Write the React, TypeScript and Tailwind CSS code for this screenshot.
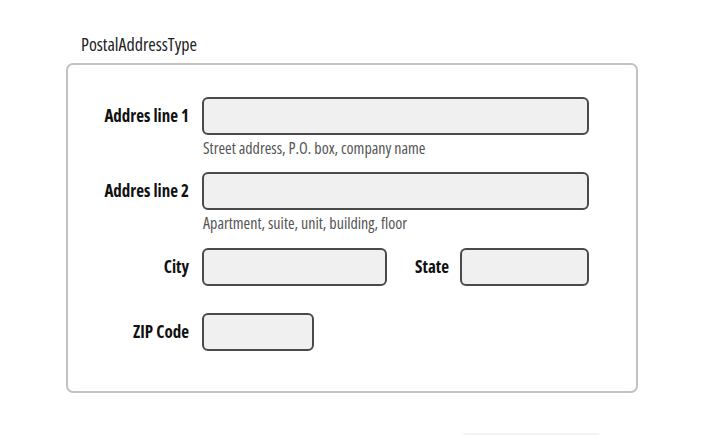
import React from 'react';

const font = { fontFamily: '"Open Sans", "Noto Sans", sans-serif' };

const Field: React.FC<{ w: string }> = ({ w }) => (
  <div className={`h-[38px] ${w} rounded-[6px] border-2 border-[#4a4a4a] bg-[#f0f0f0]`}></div>
);

const Label: React.FC<{ children: React.ReactNode }> = ({ children }) => (
  <div className="w-[121px] text-right text-[17px] leading-[20px] font-bold">{children}</div>
);

export default function App() {
  return (
    <div className="min-h-screen bg-white text-[#111] font-stretch-condensed" style={font}>
      <div className="pl-[81px] pt-[33px] text-[18px] leading-[22px] text-[#222]">PostalAddressType</div>

      <div className="ml-[66px] mt-[8px] w-[572px] rounded-[7px] border-2 border-[#c2c2c2] pt-[32px] pb-[40px]">
        {/* line 1 */}
        <div className="flex items-center">
          <Label>Addres line 1</Label>
          <div className="ml-[13px]"><Field w="w-[387px]" /></div>
        </div>
        <div className="ml-[135px] mt-[5px] text-[16px] leading-[17px] text-[#555]">Street address, P.O. box, company name</div>

        {/* line 2 */}
        <div className="mt-[15px] flex items-center">
          <Label>Addres line 2</Label>
          <div className="ml-[13px]"><Field w="w-[387px]" /></div>
        </div>
        <div className="ml-[135px] mt-[5px] text-[16px] leading-[17px] text-[#555]">Apartment, suite, unit, building, floor</div>

        {/* city / state */}
        <div className="mt-[16px] flex items-center">
          <Label>City</Label>
          <div className="ml-[13px] flex w-[387px] items-center">
            <Field w="w-[185px]" />
            <div className="ml-auto flex items-center gap-[11px]">
              <span className="text-[17px] leading-[20px] font-bold">State</span>
              <Field w="w-[129px]" />
            </div>
          </div>
        </div>

        {/* zip */}
        <div className="mt-[27px] flex items-center">
          <Label>ZIP Code</Label>
          <div className="ml-[13px]"><Field w="w-[112px]" /></div>
        </div>
      </div>

      <div className="ml-[462px] mt-[40px] h-[20px] w-[138px] rounded-[4px] bg-[#f3f3f3]"></div>
    </div>
  );
}
